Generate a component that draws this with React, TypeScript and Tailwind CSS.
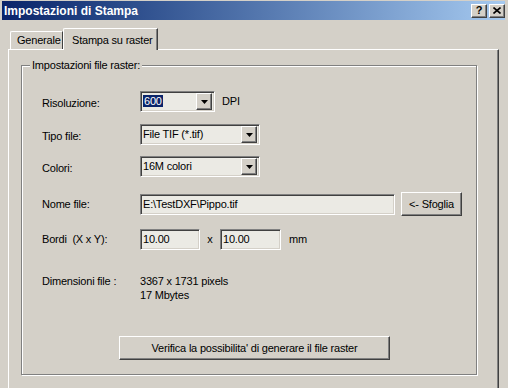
import React from "react";

const raised =
  "border border-t-white border-l-white border-r-[#404040] border-b-[#404040] shadow-[inset_-1px_-1px_0_#808080] bg-[#d4d0c8]";
const sunken =
  "border border-t-[#808080] border-l-[#808080] border-r-white border-b-white shadow-[inset_1px_1px_0_#404040,inset_-1px_-1px_0_#d4d0c8] bg-[#ebeae4]";

function Arrow() {
  return (
    <svg width="7" height="4" viewBox="0 0 7 4">
      <path d="M0 0h7L3.5 4z" fill="#000" />
    </svg>
  );
}

function Combo({ w, children }: { w: string; children: React.ReactNode }) {
  return (
    <div className={`${sunken} ${w} h-[21px] flex items-center pl-[2px] pr-[2px]`}>
      <div className="flex-1 leading-[13px] whitespace-nowrap">{children}</div>
      <div className={`${raised} w-[16px] h-[17px] flex items-center justify-center`}>
        <Arrow />
      </div>
    </div>
  );
}

function Field({ w, children }: { w: string; children: React.ReactNode }) {
  return (
    <div className={`${sunken} ${w} h-[21px] flex items-center pl-[2px] whitespace-nowrap`}>
      {children}
    </div>
  );
}

export default function App() {
  return (
    <div className="w-[508px] h-[388px] bg-[#d4d0c8] overflow-hidden font-['Liberation_Sans',Arial,sans-serif] text-[11px] tracking-[-0.2px] text-black">
      {/* Title bar */}
      <div className="pt-[1px] pl-[2px] pr-[3px]">
        <div className="h-[19px] bg-linear-to-r from-[#0a246a] to-[#a6caf0] flex items-center pl-[2px]">
          <div className="flex-1 text-white font-bold text-[12px] tracking-normal leading-[14px]">Impostazioni di Stampa</div>
          <div className="flex gap-[2px] items-center">
            <div className={`${raised} w-[16px] h-[14px] flex items-center justify-center text-[11px] font-bold leading-none`}>?</div>
            <div className={`${raised} w-[16px] h-[14px] flex items-center justify-center`}>
              <svg width="8" height="7" viewBox="0 0 8 7">
                <path d="M0.5 0.5L7.5 6.5M7.5 0.5L0.5 6.5" stroke="#000" strokeWidth="1.6" />
              </svg>
            </div>
          </div>
        </div>
      </div>

      {/* Tabs */}
      <div className="mt-[8px] pl-[10px] flex items-end h-[21px] relative z-10">
        <div className="w-[53px] h-[18px] border-l border-t border-white rounded-tl-[2px] border-r border-r-[#404040] flex items-center pl-[6px]">
          Generale
        </div>
        <div className="w-[95px] h-[22px] -mb-[1px] border-l border-t border-white rounded-tl-[2px] border-r border-r-[#404040] shadow-[inset_-1px_0_0_#808080] bg-[#d4d0c8] flex items-start pt-[3px] pl-[8px]">
          Stampa su raster
        </div>
      </div>

      {/* Panel */}
      <div className="ml-[8px] w-[491px] h-[345px] border-l border-t border-white border-r border-r-[#404040] shadow-[inset_-1px_0_0_#808080]">
        <div className="ml-[12px] mt-[15px] w-[456px] h-[310px] border border-[#808080] shadow-[inset_1px_1px_0_#fff,1px_1px_0_#fff] relative">
          <div className="absolute left-[8px] -top-[8px] px-[2px] bg-[#d4d0c8] leading-[14px] whitespace-nowrap">
            Impostazioni file raster:
          </div>
          <div className="pl-[20px] flex flex-col">
            {/* Risoluzione */}
            <div className="mt-[25px] flex items-center h-[21px]">
              <div className="w-[98px] pt-[4px]">Risoluzione:</div>
              <Combo w="w-[75px]">
                <span className="bg-[#0a246a] text-white px-[1px]">600</span>
              </Combo>
              <div className="ml-[7px]">DPI</div>
            </div>
            {/* Tipo file */}
            <div className="mt-[12px] flex items-center h-[21px]">
              <div className="w-[98px] pt-[3px]">Tipo file:</div>
              <Combo w="w-[120px]">File TIF (*.tif)</Combo>
            </div>
            {/* Colori */}
            <div className="mt-[11px] flex items-center h-[21px]">
              <div className="w-[98px] pt-[3px]">Colori:</div>
              <Combo w="w-[120px]">16M colori</Combo>
            </div>
            {/* Nome file */}
            <div className="mt-[15px] flex items-center h-[24px]">
              <div className="w-[98px]">Nome file:</div>
              <Field w="w-[255px]">E:\TestDXF\Pippo.tif</Field>
              <div className={`${raised} ml-[6px] w-[61px] h-[24px] flex items-center justify-center`}>
                &lt;- Sfoglia
              </div>
            </div>
            {/* Bordi */}
            <div className="mt-[13px] flex items-center h-[21px]">
              <div className="w-[98px] whitespace-pre">Bordi  (X x Y):</div>
              <Field w="w-[60px]">10.00</Field>
              <div className="w-[20px] text-center">x</div>
              <Field w="w-[61px]">10.00</Field>
              <div className="ml-[8px]">mm</div>
            </div>
            {/* Dimensioni */}
            <div className="mt-[24px] flex items-start leading-[14px]">
              <div className="w-[98px]">Dimensioni file :</div>
              <div>
                <div>3367 x 1731 pixels</div>
                <div>17 Mbytes</div>
              </div>
            </div>
            {/* Verifica */}
            <div className="mt-[34px] ml-[77px]">
              <div className={`${raised} w-[271px] h-[24px] flex items-center justify-center`}>
                Verifica la possibilita' di generare il file raster
              </div>
            </div>
          </div>
        </div>
      </div>
    </div>
  );
}
